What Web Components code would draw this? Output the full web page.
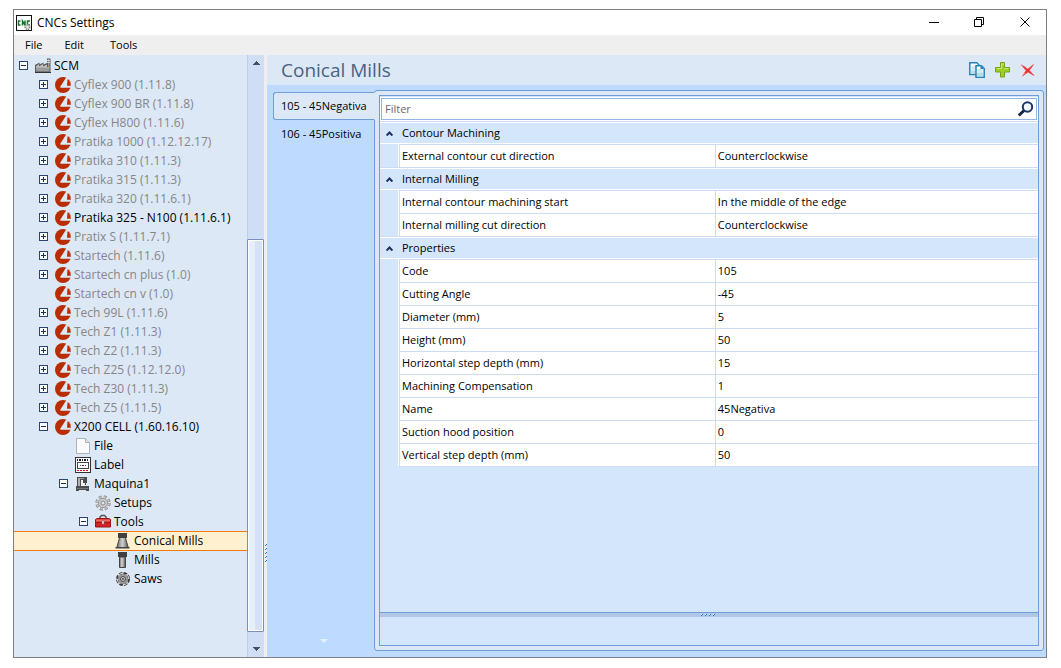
<!DOCTYPE html>
<html lang="en">
<head>
<meta charset="utf-8">
<meta name="viewport" content="width=device-width, initial-scale=1">
<title>CNCs Settings</title>
<style>
  html, body { height: 100%; }
  body {
    margin: 0; box-sizing: border-box; padding: 9px 14px 10px 13px; background: #fff; color: #000;
    font-family: "Open Sans", "Noto Sans", sans-serif;
    --text: 11px; --tree-text: 12px; --line: #6f9dd8; --soft: #dde8f6; --grid: #d4e6fc; --cell: #cbdcf4;
  }
</style>
</head>
<body>
<app-window>
  <title-bar slot="title">CNCs Settings</title-bar>
  <menu-bar slot="menu"></menu-bar>
  <tree-view slot="tree">
    <tree-node level="0" icon="factory" state="open">SCM</tree-node>
    <tree-node level="1" icon="cnc" state="closed" dim>Cyflex 900 (1.11.8)</tree-node>
    <tree-node level="1" icon="cnc" state="closed" dim>Cyflex 900 BR (1.11.8)</tree-node>
    <tree-node level="1" icon="cnc" state="closed" dim>Cyflex H800 (1.11.6)</tree-node>
    <tree-node level="1" icon="cnc" state="closed" dim>Pratika 1000 (1.12.12.17)</tree-node>
    <tree-node level="1" icon="cnc" state="closed" dim>Pratika 310 (1.11.3)</tree-node>
    <tree-node level="1" icon="cnc" state="closed" dim>Pratika 315 (1.11.3)</tree-node>
    <tree-node level="1" icon="cnc" state="closed" dim>Pratika 320 (1.11.6.1)</tree-node>
    <tree-node level="1" icon="cnc" state="closed">Pratika 325 - N100 (1.11.6.1)</tree-node>
    <tree-node level="1" icon="cnc" state="closed" dim>Pratix S (1.11.7.1)</tree-node>
    <tree-node level="1" icon="cnc" state="closed" dim>Startech (1.11.6)</tree-node>
    <tree-node level="1" icon="cnc" state="closed" dim>Startech cn plus (1.0)</tree-node>
    <tree-node level="1" icon="cnc" dim>Startech cn v (1.0)</tree-node>
    <tree-node level="1" icon="cnc" state="closed" dim>Tech 99L (1.11.6)</tree-node>
    <tree-node level="1" icon="cnc" state="closed" dim>Tech Z1 (1.11.3)</tree-node>
    <tree-node level="1" icon="cnc" state="closed" dim>Tech Z2 (1.11.3)</tree-node>
    <tree-node level="1" icon="cnc" state="closed" dim>Tech Z25 (1.12.12.0)</tree-node>
    <tree-node level="1" icon="cnc" state="closed" dim>Tech Z30 (1.11.3)</tree-node>
    <tree-node level="1" icon="cnc" state="closed" dim>Tech Z5 (1.11.5)</tree-node>
    <tree-node level="1" icon="cnc" state="open">X200 CELL (1.60.16.10)</tree-node>
    <tree-node level="2" icon="file">File</tree-node>
    <tree-node level="2" icon="label">Label</tree-node>
    <tree-node level="2" icon="machine" state="open">Maquina1</tree-node>
    <tree-node level="3" icon="gear">Setups</tree-node>
    <tree-node level="3" icon="toolbox" state="open">Tools</tree-node>
    <tree-node level="4" icon="cone" selected>Conical Mills</tree-node>
    <tree-node level="4" icon="mill">Mills</tree-node>
    <tree-node level="4" icon="saw">Saws</tree-node>
  </tree-view>
  <tool-page slot="page">
    <span slot="heading">Conical Mills</span>
    <tab-list slot="tabs"></tab-list>
    <property-grid></property-grid>
  </tool-page>
</app-window>

<script>
const svg = (w, h, body, extra = '') =>
  `<svg width="${w}" height="${h}" viewBox="0 0 ${w} ${h}" aria-hidden="true" ${extra}>${body}</svg>`;
const crisp = 'shape-rendering="crispEdges"';

const ICONS = {
  app: svg(16, 16, `<rect x=".5" y=".5" width="15" height="15" fill="#fff" stroke="#111"/>
    <path d="M4.500 6H2.500v4h2M6.500 10.500V6l2.500 4V5.500M14 6h-2.500v4H14" fill="none" stroke="#16752a" stroke-width="1.500"/>
    <circle cx="11.500" cy="12" r="2.400" fill="#ddd" stroke="#888" stroke-width="1.600" stroke-dasharray="1.200 .7"/>`),
  factory: svg(16, 16, `<path d="M0 15V7L4.500 4.500v2L8.500 4.500v2L12 5V.5H15.500V15z" fill="#5a5a5a"/>
    <path d="M1 8.500l3-2.500v2.500L8 6v2.500L12 6.500V9h2.500v1H1z" fill="#c4c4c4"/>
    <path d="M1 9.500h13.500v4H1z" fill="#9c9c9c"/>
    <path d="M13 1h1.500v8H13z" fill="#999"/><path d="M12 2.500h3M12 4.500h3" stroke="#d8d8d8"/>
    <path d="M1 13.500h14" stroke="#777"/><path d="M0 14.500h16" stroke="#333"/>`),
  cnc: svg(16, 16, `<circle cx="8" cy="8" r="8" fill="#b92d00"/>
    <path d="M11.500 0L14 1.500 16 8V10.800H5.400V9.600z" fill="#dde8f6"/>
    <path d="M12.500 2.300L14.200 3 16 8.800H12z" fill="#b92d00"/>`),
  file: svg(16, 16, `<path d="M1.500.5h9l4 4v11h-13z" fill="#fafafa" stroke="#aeb3ba"/>
    <path d="M10.500.5v4h4" fill="#e6e6e6" stroke="#aeb3ba"/>`),
  label: svg(16, 16, `<path d="M.5.5h15v15H.5z" fill="#fff" stroke="#333"/>
    <path d="M2 3h12" stroke="#222" stroke-width="2" stroke-dasharray="1 1 2 1"/>
    <path d="M2.500 5.500h11v6h-11z" fill="none" stroke="#444"/>
    <path d="M5 8.500h7" stroke="#333" stroke-dasharray="1 1 2 1"/>
    <path d="M2 13.500h12" stroke="#e01010" stroke-dasharray="2 1"/>`, crisp),
  machine: svg(16, 16, `<path d="M2 1h10v6h-1v2h-1V7H8V4H6v6h8v5h-3v-1H4v1H1v-5h1z" fill="#4c4c4c"/>
    <path d="M3 2h2v8H3z" fill="#b0b0b0"/><path d="M5 2h4v1H5z" fill="#999"/><path d="M6 4h2v3h1v3H6z" fill="#f4f4f4"/>
    <path d="M2 12h11v1H2z" fill="#777"/>`, crisp),
  gear: svg(16, 16, `<circle cx="8" cy="8" r="6.300" fill="none" stroke="#8d8d8d" stroke-width="2.800" stroke-dasharray="2.900 2.048"/>
    <circle cx="8" cy="8" r="6" fill="none" stroke="#c9c9c9" stroke-width="1.800" stroke-dasharray="1.700 3.012" stroke-dashoffset="-.5"/>
    <circle cx="8" cy="8" r="4.600" fill="#ccc" stroke="#999"/>
    <circle cx="8" cy="8" r="2" fill="#dde8f6" stroke="#888"/>`),
  toolbox: svg(16, 16, `<path d="M5 5.500V3L6.500 1.500h3L11 3v2.500" fill="none" stroke="#555" stroke-width="1.500"/>
    <path d="M.5 5.500L2 4.500h12l1.500 1v7.500H.5z" fill="#d32222" stroke="#9a1414"/>
    <path d="M1 5.500h14v2H1z" fill="#ef6a62"/><path d="M0 8.500h16" stroke="#a31515"/>
    <path d="M7 7h2v3H7z" fill="#eee" stroke="#777" stroke-width=".5"/>`),
  cone: svg(16, 16, `<defs><linearGradient id="m"><stop stop-color="#666"/><stop offset=".5" stop-color="#d0d0d0"/><stop offset="1" stop-color="#555"/></linearGradient></defs>
    <path d="M4.500 5h6l3 9.500h-12z" fill="url(#m)"/><path d="M3 0h9v5H3z" fill="#404040"/><path d="M4.500 5L2 14M10.500 5L13 14" stroke="#444"/>
    <path d="M.500 14h14v1.500H.500z" fill="#444"/>`),
  mill: svg(16, 16, `<defs><linearGradient id="m"><stop stop-color="#666"/><stop offset=".4" stop-color="#d8d8d8"/><stop offset="1" stop-color="#555"/></linearGradient></defs>
    <path d="M4.500 5h6v10.500h-6z" fill="url(#m)" stroke="#444"/><path d="M3 0h9v5H3z" fill="#404040"/>`),
  saw: svg(16, 16, `<circle cx="8" cy="8" r="6" fill="#999" stroke="#3c3c3c" stroke-width="2" stroke-dasharray="3.500 1.212"/>
    <path d="M8 2.500C5 2 3.500 4 3.500 5.500M13.500 8c.5-3-1.500-4.500-3-4.500M8 13.500c3 .5 4.500-1.500 4.500-3M2.500 8c-.5 3 1.500 4.500 3 4.500" fill="none" stroke="#d5d5d5"/>
    <circle cx="8" cy="8" r="2.400" fill="#ddd" stroke="#444"/><circle cx="8" cy="8" r=".9" fill="#333"/>`),
  copy: svg(16, 16, `<path d="M.8.8h7L10 3v9.500H.8z" fill="#fff" stroke="#2583b5" stroke-width="1.500"/>
    <path d="M2.500 5h5M2.500 7h5" stroke="#9fd0ea"/><path d="M1.800 8.500h8v3h-8z" fill="#b5ddea"/>
    <path d="M7 3.800h5.500L15.200 6.500v8.700H7z" fill="#fff" stroke="#2583b5" stroke-width="1.500"/>
    <path d="M11.500 3.500V7H15z" fill="#2583b5"/><path d="M8.500 8h5M8.500 10h5" stroke="#9fd0ea"/><path d="M8 11h6v3.500H8z" fill="#b5ddea"/>`),
  plus: svg(15, 16, `<path d="M5.500 .5h4v5h5V10h-5v5h-4v-5h-5V5.500h5z" fill="#9cd028" stroke="#74a31b"/>
    <path d="M6.500 2H9M6.500 2v4.500H2M9.500 6.500h4" fill="none" stroke="#cbea7b"/>`),
  remove: svg(15, 16, `<path d="M1.500 3L5 5l2.800 2.200L13.500 2.500 9.300 8.500l4.700 5-6-3.500L2.500 14l3.600-5.500z" fill="#f2302f" stroke="#f2302f" stroke-width=".6"/>
    <path d="M1 2.500l2 1.500M2 14l3-3" stroke="#f58a8a"/>`),
  search: svg(17, 16, `<circle cx="10.500" cy="6" r="4.700" fill="#f4f8ff" stroke="#1c3567" stroke-width="2"/>
    <path d="M7 9.500L1.800 14.500" stroke="#13264f" stroke-width="3"/>`),
  minimize: svg(11, 11, '<path d="M1 5.500h10" stroke="#000"/>', crisp),
  restore: svg(11, 11, '<path d="M.5 2.500h7v7h-7zM2.500 2V.5h7v7H8" fill="none" stroke="#000"/>'),
  close: svg(11, 11, '<path d="M.5.5l9 9M9.500.5l-9 9" stroke="#000"/>'),
  up: svg(7, 4, '<path d="M3 0h1v1h1v1h1v1h1v1H0V3h1V2h1V1h1z" fill="#42506e"/>', crisp),
  down: svg(7, 4, '<path d="M0 0h7v1H6v1H5v1H4v1H3V3H2V2H1V1H0z" fill="#42506e"/>', crisp),
  more: svg(8, 4, '<path d="M0 0h8L4 4z" fill="#e4f1ff"/>'),
  chevron: svg(7, 5, '<path d="M.6 4.500l2.900-3 2.900 3" fill="none" stroke="#16305f" stroke-width="2"/>'),
  open: svg(9, 9, '<path d="M.5.5h8v8h-8z" fill="#fdfeff" stroke="#2a4470"/><path d="M2 4.500h5" stroke="#1b2f57"/>', crisp),
  closed: svg(9, 9, '<path d="M.5.5h8v8h-8z" fill="#fdfeff" stroke="#2a4470"/><path d="M2 4.500h5M4.500 2v5" stroke="#1b2f57"/>', crisp)
};

/* A grip mark is a run of two-pixel diagonal specks. */
const speck = (x, y) => `<path d="M${x + 1} ${y}h1v1h-1zM${x} ${y + 1}h1v1h-1z" fill="#1f6fc4"/><path d="M${x} ${y}h1v1h-1z" fill="#fff"/>`;
const GRIP_ACROSS = svg(16, 3, [0, 4, 8, 12].map(x => speck(x, 0)).join(''), crisp);
const GRIP_DOWN = svg(3, 18, [0, 4, 8, 12, 16].map(y => speck(1, y)).join(''), crisp);

function define(name, css, render) {
  customElements.define(name, class extends HTMLElement {
    constructor() {
      super();
      this.attachShadow({ mode: 'open' });
    }
    connectedCallback() {
      this.shadowRoot.innerHTML =
        `<style>*{box-sizing:border-box}svg{display:block;flex:none}button{font:inherit;color:inherit;border:0;background:none;padding:0;margin:0}${css}</style>${render(this)}`;
    }
  });
}

define('app-window', `
  :host { display: flex; flex-direction: column; box-sizing: border-box; min-height: 100%; border: 1px solid #7f8084; background: #efefef; }
  main { flex: 1; display: grid; grid-template-columns: 250px 3px minmax(0, 1fr); }
  .split { display: flex; flex-direction: column; background: #efefef; }
  .split::before { content: ""; flex: 489; }
  .split::after { content: ""; flex: 95; }
`, () => `<slot name="title"></slot><slot name="menu"></slot>
  <main><slot name="tree"></slot><div class="split">${GRIP_DOWN}</div><slot name="page"></slot></main>`);

define('title-bar', `
  :host { display: flex; align-items: center; height: 25px; padding-left: 2px; background: #fff; font-size: 12px; }
  h1 { flex: 1; margin: 0 0 0 5px; font: inherit; }
  .buttons { display: flex; gap: 4px; }
  button { width: 42px; height: 25px; display: flex; align-items: center; justify-content: center; }
`, () => `${ICONS.app}<h1><slot></slot></h1><div class="buttons">
  <button aria-label="Minimize">${ICONS.minimize}</button>
  <button aria-label="Restore">${ICONS.restore}</button>
  <button aria-label="Close">${ICONS.close}</button></div>`);

define('menu-bar', `
  :host { display: block; height: 20px; font-size: var(--text); }
  nav { display: flex; gap: 6px; padding-left: 3px; }
  button { height: 20px; padding: 0 8px 2px; }
  button:last-child { margin-left: 4px; }
`, () => '<nav><button>File</button><button>Edit</button><button>Tools</button></nav>');

define('tree-view', `
  :host { display: grid; grid-template-columns: minmax(0, 1fr) 17px; background: var(--soft); }
  .nodes { padding-top: 1px; }
  .bar { display: flex; flex-direction: column; align-items: stretch; background: #cfdef4; border-left: 1px solid #bccfe9; }
  .bar button { height: 16px; display: flex; align-items: center; justify-content: center; }
  .track { flex: 1; display: flex; align-items: flex-end; padding-bottom: 9px; }
  .thumb { flex: 1; height: 70%; margin-left: -1px; border: 1px solid #7590bd; border-radius: 1px; box-shadow: inset 0 0 0 1px #fff; background: linear-gradient(90deg, #e7effb 50%, #d5e2f4 50%); }
`, () => `<div class="nodes" role="tree"><slot></slot></div>
  <div class="bar"><button aria-label="Scroll up">${ICONS.up}</button>
  <div class="track"><div class="thumb"></div></div>
  <button aria-label="Scroll down">${ICONS.down}</button></div>`);

define('tree-node', `
  :host { display: flex; align-items: center; box-sizing: border-box; height: 19px; padding-left: 5px; font-size: var(--tree-text); line-height: 18px; white-space: nowrap; }
  :host([dim]) { color: #868686; }
  :host([selected]) { background: #fff0d0; box-shadow: inset 0 1px #f47b12, 0 1px #f47b12; }
  :host([level="1"]) { padding-left: 25px; }
  :host([level="2"]) { padding-left: 45px; }
  :host([level="3"]) { padding-left: 65px; }
  :host([level="4"]) { padding-left: 85px; }
  .toggle { width: 9px; height: 9px; margin-right: 7px; }
  .text { margin-left: 3px; }
`, el => {
  const state = el.getAttribute('state');
  const toggle = state ? `<button class="toggle" aria-label="Toggle">${ICONS[state]}</button>` : '<span class="toggle"></span>';
  return `${toggle}${ICONS[el.getAttribute('icon')]}<span class="text"><slot></slot></span>`;
});

define('tool-page', `
  :host { display: flex; flex-direction: column; background: #bedaff; }
  header { display: flex; align-items: center; height: 30px; padding: 0 11px 0 14px; background: var(--soft); }
  h2 { flex: 1; margin: 0; font-size: 19px; line-height: 30px; font-weight: 400; color: #4b617e; }
  .actions { display: flex; gap: 10px; }
  .body { flex: 1; display: grid; grid-template-columns: 101px minmax(0, 1fr); padding: 5px 2px 6px 6px; }
  .panel { display: flex; border: 1px solid var(--line); border-radius: 3px; padding: 4px; background: var(--soft); }
`, () => `<header><h2><slot name="heading"></slot></h2><div class="actions">
  <button aria-label="Duplicate">${ICONS.copy}</button>
  <button aria-label="Add">${ICONS.plus}</button>
  <button aria-label="Remove">${ICONS.remove}</button></div></header>
  <div class="body"><slot name="tabs"></slot><div class="panel"><slot></slot></div></div>`);

define('tab-list', `
  :host { position: relative; display: flex; flex-direction: column; padding-top: 2px; font-size: var(--text); }
  button { height: 28px; padding: 0 7px 2px; text-align: left; border: 1px solid transparent; white-space: nowrap; }
  button[aria-selected=true] { margin-right: -1px; background: var(--soft); border-color: var(--line); border-right-color: var(--soft); border-radius: 3px 0 0 3px; }
  .more { margin-top: auto; align-self: center; padding-bottom: 8px; }
`, () => `<button role="tab" aria-selected="true">105 - 45Negativa</button>
  <button role="tab" aria-selected="false">106 - 45Positiva</button><div class="more">${ICONS.more}</div>`);

const GROUPS = [
  ['Contour Machining', [['External contour cut direction', 'Counterclockwise']]],
  ['Internal Milling', [['Internal contour machining start', 'In the middle of the edge'], ['Internal milling cut direction', 'Counterclockwise']]],
  ['Properties', [['Code', '105'], ['Cutting Angle', '-45'], ['Diameter (mm)', '5'], ['Height (mm)', '50'],
    ['Horizontal step depth (mm)', '15'], ['Machining Compensation', '1'], ['Name', '45Negativa'],
    ['Suction hood position', '0'], ['Vertical step depth (mm)', '50']]]
];

define('property-grid', `
  :host { flex: 1; display: flex; flex-direction: column; border: 1px solid var(--line); background: var(--grid); font-size: var(--text); }
  .filter { display: flex; align-items: center; height: 22px; margin: 2px 1px 1px; border: 1px solid #92b7e6; outline: 1px solid #fff; background: #fff; padding-right: 2px; }
  input { flex: 1; min-width: 0; height: 20px; border: 0; outline: 0; padding: 0 3px 2px; background: none; font: inherit; }
  input::placeholder { color: #6d6d6d; opacity: 1; }
  table { width: 100%; table-layout: fixed; border-collapse: separate; border-spacing: 0; }
  .gutter { width: 19px; }
  .name { width: 48%; }
  th, td { height: 23px; padding: 0 0 0 2px; text-align: left; font-weight: 400; line-height: 20px; }
  .group > * { border-top: 1px solid var(--cell); box-shadow: inset 0 1px #fff, inset 0 -1px #fff; }
  .group th { padding-left: 3px; }
  .group td { padding-left: 6px; }
  .row > :first-child { border-right: 1px solid #fff; }
  .row > :not(:first-child) { background: #fff; border-top: 1px solid var(--cell); border-left: 1px solid var(--cell); }
  tbody:last-child tr:last-child > :not(:first-child) { box-shadow: 0 1px var(--cell); }
  .split { margin-top: auto; height: 5px; border-top: 1px solid var(--line); background: #b0c7e7; display: flex; justify-content: center; align-items: center; }
  .foot { height: 28px; }
`, () => `<div class="filter"><input type="text" placeholder="Filter" aria-label="Filter"><button aria-label="Search">${ICONS.search}</button></div>
  <table><colgroup><col class="gutter"><col class="name"><col></colgroup>
  ${GROUPS.map(([title, rows]) => `<tbody><tr class="group"><td>${ICONS.chevron}</td><th colspan="2" scope="colgroup">${title}</th></tr>
    ${rows.map(([k, v]) => `<tr class="row"><td></td><th scope="row">${k}</th><td>${v}</td></tr>`).join('')}</tbody>`).join('')}
  </table>
  <div class="split">${GRIP_ACROSS}</div><div class="foot"></div>`);
</script>
</body>
</html>
